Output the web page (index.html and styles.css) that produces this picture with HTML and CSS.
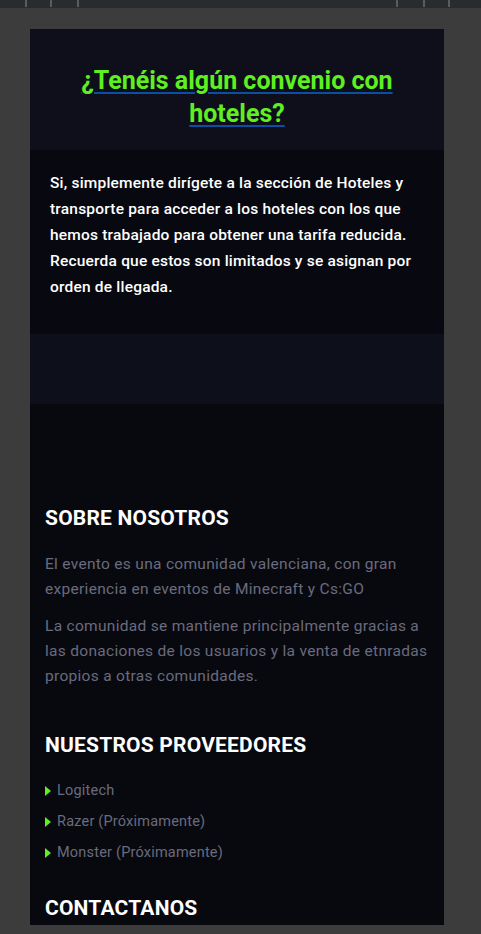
FILE: index.html
```html
<!DOCTYPE html>
<html lang="es">
<head>
<meta charset="utf-8">
<title>FAQ</title>
<link rel="stylesheet" href="styles.css">
</head>
<body>
<div class="topbar">
  <div class="ticks ticks-left"><span></span><span></span><span></span></div>
  <div class="ticks ticks-right"><span></span><span></span><span></span></div>
</div>
<main class="page">
  <div class="panel">
    <section class="faq-q">
      <h2><a href="#">¿Tenéis algún convenio con hoteles?</a></h2>
    </section>
    <section class="faq-a">
      <p>Si, simplemente dirígete a la sección de Hoteles y transporte para acceder a los hoteles con los que hemos trabajado para obtener una tarifa reducida. Recuerda que estos son limitados y se asignan por orden de llegada.</p>
    </section>
    <div class="stripe"></div>
    <footer class="footer">
      <h3>SOBRE NOSOTROS</h3>
      <p>El evento es una comunidad valenciana, con gran experiencia en eventos de Minecraft y Cs:GO</p>
      <p>La comunidad se mantiene principalmente gracias a las donaciones de los usuarios y la venta de etnradas propios a otras comunidades.</p>
      <h3 class="gap">NUESTROS PROVEEDORES</h3>
      <ul class="providers">
        <li>Logitech</li>
        <li>Razer (Próximamente)</li>
        <li>Monster (Próximamente)</li>
      </ul>
      <h3 class="gap2">CONTACTANOS</h3>
    </footer>
  </div>
</main>
</body>
</html>
```
FILE: styles.css
```css
* { box-sizing: border-box; }
html, body { margin: 0; padding: 0; }
body {
  background: #3c3c3c;
  font-family: Roboto, "Liberation Sans", sans-serif;
  overflow: hidden;
}
.topbar {
  height: 8px;
  background: #2a2b2d;
  display: flex;
  justify-content: space-between;
}
.ticks { display: flex; height: 7px; }
.ticks span { width: 2px; height: 7px; background: #5a5b5d; }
.ticks-left { margin-left: 25px; gap: 23px; }
.ticks-left span:nth-child(3) { margin-left: 2px; }
.ticks-right { margin-right: 31px; gap: 25px; }
.ticks-right span:nth-child(3) { margin-left: -2px; }

.page { padding: 21px 37px 0 30px; }
.panel {
  width: 414px;
  height: 896px;
  overflow: hidden;
  background: #08090f;
}
.faq-q {
  background: #0e0f1b;
  height: 121px;
  padding: 35px 20px 0;
  text-align: center;
}
.faq-q h2 {
  margin: 0;
  font-size: 25px;
  line-height: 33px;
  font-weight: 700;
}
.faq-q a {
  color: #5ef021;
  text-decoration: underline;
  text-decoration-color: #0a4fa3;
  text-decoration-thickness: 2px;
  text-underline-offset: 3px;
}
.faq-a {
  background: #080910;
  height: 184px;
  padding: 20px 20px 0;
}
.faq-a p {
  margin: 0;
  color: #ffffff;
  font-size: 15.5px;
  line-height: 26px;
  font-weight: 500;
  letter-spacing: 0.2px;
}
.stripe { height: 70px; background: #0d0f1b; }
.footer { padding: 101px 15px 0; }
.footer h3 {
  margin: 0 0 21px;
  color: #ffffff;
  font-size: 21px;
  line-height: 26px;
  font-weight: 700;
  letter-spacing: 0.2px;
}
.footer p {
  margin: 0 0 12px;
  color: #6a6b7e;
  font-size: 15.5px;
  line-height: 25px;
  letter-spacing: 0.3px;
}
.footer h3.gap { margin-top: 43px; margin-bottom: 20px; }
.footer h3.gap2 { margin-top: 30px; }
.providers { list-style: none; margin: 0; padding: 0; display: flex; flex-direction: column; gap: 6px; }
.providers li {
  color: #6a6b7e;
  font-size: 14.5px;
  line-height: 25px;
  letter-spacing: 0.2px;
  display: flex;
  align-items: center;
  gap: 6px;
}
.providers li::before {
  content: "";
  width: 0; height: 0;
  border-top: 5px solid transparent;
  border-bottom: 5px solid transparent;
  border-left: 6px solid #5ef021;
}
```
